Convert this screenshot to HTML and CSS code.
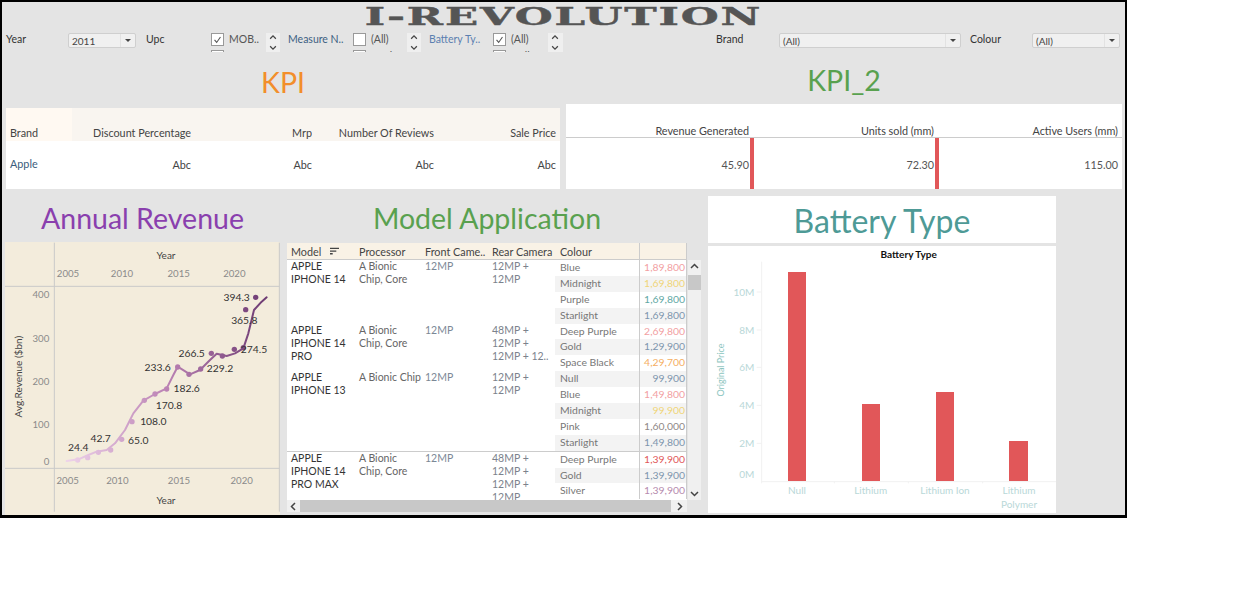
FILE: index.html
```html
<!DOCTYPE html>
<html lang="en">
<head>
<meta charset="utf-8">
<title>I-Revolution</title>
<link rel="stylesheet" href="styles.css">
</head>
<body>
<main class="dash">
  <header class="brandbar"><h1 class="logo">I-REVOLUTION</h1></header>

  <section class="filters">
    <div class="flabel">Year</div>
    <div class="select"><span class="sval">2011</span><span class="sbtn"><i class="tri"></i></span></div>
    <div class="flabel pl10">Upc</div>
    <div class="flist">
      <div class="fitem"><span class="cb on"><svg viewBox="0 0 13 13"><path d="M3 7l2.500 3L10 3.500"/></svg></span><span>MOB..</span></div>
      <div class="fitem"><span class="cb"></span><span>MOB..</span></div>
    </div>
    <div class="spin"><svg viewBox="0 0 14 20"><path d="M4 6l3-3 3 3M4 14l3 3 3-3"/></svg></div>
    <div class="flabel pl8 blue">Measure N..</div>
    <div class="flist">
      <div class="fitem"><span class="cb"></span><span>(All)</span></div>
      <div class="fitem"><span class="cb on"></span><span>Apple</span></div>
    </div>
    <div class="spin"><svg viewBox="0 0 14 20"><path d="M4 6l3-3 3 3M4 14l3 3 3-3"/></svg></div>
    <div class="flabel pl8 blue2">Battery Ty..</div>
    <div class="flist blue2">
      <div class="fitem"><span class="cb on"><svg viewBox="0 0 13 13"><path d="M3 7l2.500 3L10 3.500"/></svg></span><span>(All)</span></div>
      <div class="fitem"><span class="cb"></span><span>Null</span></div>
    </div>
    <div class="spin"><svg viewBox="0 0 14 20"><path d="M4 6l3-3 3 3M4 14l3 3 3-3"/></svg></div>
    <div class="flabel pl153">Brand</div>
    <div class="select"><span class="sval">(All)</span><span class="sbtn"><i class="tri"></i></span></div>
    <div class="flabel pl9">Colour</div>
    <div class="select"><span class="sval">(All)</span><span class="sbtn"><i class="tri"></i></span></div>
  </section>

  <section class="kpis">
    <div class="kpi-left">
      <h2 class="title orange kpi-title-l">KPI</h2>
      <div class="ktable">
        <div class="khead kbrand">Brand</div>
        <div class="khead">Discount Percentage</div>
        <div class="khead">Mrp</div>
        <div class="khead">Number Of Reviews</div>
        <div class="khead">Sale Price</div>
        <div class="khead"></div>
        <div class="kcell kleft">Apple</div>
        <div class="kcell">Abc</div>
        <div class="kcell">Abc</div>
        <div class="kcell">Abc</div>
        <div class="kcell">Abc</div>
        <div class="kcell"></div>
      </div>
    </div>
    <div class="kpi-right">
      <h2 class="title green kpi-title-r">KPI_2</h2>
      <div class="k2table">
        <div class="k2head">Revenue Generated</div>
        <div class="k2head">Units sold (mm)</div>
        <div class="k2head">Active Users (mm)</div>
        <div class="k2cell bar">45.90</div>
        <div class="k2cell bar">72.30</div>
        <div class="k2cell">115.00</div>
      </div>
    </div>
  </section>

  <section class="lower">
    <div class="annual">
      <h2 class="title purple head52">Annual Revenue</h2>
      <div class="annual-panel">
        <svg class="chart" viewBox="15 126 825 819" width="275" height="273">
          <defs>
            <linearGradient id="rev" gradientUnits="userSpaceOnUse" x1="200" y1="0" x2="800" y2="0">
              <stop offset="0" stop-color="#eed3ea"/>
              <stop offset="0.5" stop-color="#bb82b4"/>
              <stop offset="1" stop-color="#6c3a72"/>
            </linearGradient>
          </defs>
          <g class="rule">
            <path d="M163 128V935M15 259H838M15 805H838M838 128V935"/>
          </g>
          <path class="revline" d="M200 783L235 778 265 765 290 755 320 750 345 730 375 690 400 640 430 602 465 582 500 565 520 525 533 500 570 523 600 510 630 480 650 461 680 468 705 460 730 445 745 400 762 330 785 305 800 292"/>
          <g class="revdots">
            <circle cx="233" cy="780" r="8"/><circle cx="263" cy="773" r="8"/><circle cx="295" cy="757" r="8"/><circle cx="332" cy="750" r="8"/><circle cx="365" cy="718" r="8"/><circle cx="396" cy="665" r="8"/><circle cx="433" cy="601" r="8"/><circle cx="465" cy="582" r="8"/><circle cx="500" cy="567" r="8"/><circle cx="533" cy="501" r="8"/><circle cx="567" cy="523" r="8"/><circle cx="602" cy="507" r="8"/><circle cx="634" cy="460" r="8"/><circle cx="667" cy="468" r="8"/><circle cx="703" cy="448" r="8"/><circle cx="730" cy="443" r="8"/><circle cx="737" cy="329" r="8"/><circle cx="767" cy="292" r="8"/>
          </g>
          <g class="ctext tick">
            <text x="204" y="232">2005</text><text x="366" y="232">2010</text><text x="536" y="232">2015</text><text x="703" y="232">2020</text>
            <text x="203" y="852">2005</text><text x="352" y="852">2010</text><text x="537" y="852">2015</text><text x="725" y="852">2020</text>
          </g>
          <g class="ctext tick endt">
            <text x="148" y="295">400</text><text x="148" y="427">300</text><text x="148" y="555">200</text><text x="148" y="685">100</text><text x="148" y="796">0</text>
          </g>
          <g class="ctext axis">
            <text x="498" y="176">Year</text><text x="498" y="911">Year</text>
            <text transform="translate(65 530) rotate(-90)">Avg.Revenue ($bn)</text>
          </g>
          <g class="ctext dlabel">
            <text x="235" y="752">24.4</text><text x="302" y="726">42.7</text><text x="415" y="731">65.0</text><text x="460" y="675">108.0</text><text x="507" y="627">170.8</text><text x="560" y="577">182.6</text><text x="473" y="513">233.6</text><text x="575" y="470">266.5</text><text x="660" y="517">229.2</text><text x="762" y="458">274.5</text><text x="733" y="373">365.8</text><text x="710" y="303">394.3</text>
          </g>
        </svg>
      </div>
    </div>

    <div class="model">
      <h2 class="title green head53">Model Application</h2>
      <div class="mwrap">
        <div class="mtable">
          <div class="mhead">
            <div class="mh first">Model<svg class="sort" viewBox="0 0 10 9"><path d="M0 1h10M0 4h7M0 7h3"/></svg></div>
            <div class="mh">Processor</div>
            <div class="mh">Front Came..</div>
            <div class="mh">Rear Camera</div>
            <div class="mh mcolour">Colour</div>
            <div class="mh mprice"></div>
          </div>
          <div class="mbody">
            <div class="mgroup">
              <div class="mname">APPLE<br>IPHONE 14</div>
              <div class="mproc">A Bionic<br>Chip, Core</div>
              <div class="mfront">12MP</div>
              <div class="mrear">12MP +<br>12MP</div>
              <div class="colours">
                <div class="crow"><span class="cname">Blue</span><span class="cprice red-l">1,89,800</span></div>
                <div class="crow"><span class="cname">Midnight</span><span class="cprice yellow">1,69,800</span></div>
                <div class="crow"><span class="cname">Purple</span><span class="cprice teal">1,69,800</span></div>
                <div class="crow"><span class="cname">Starlight</span><span class="cprice slate">1,69,800</span></div>
              </div>
            </div>
            <div class="mgroup">
              <div class="mname">APPLE<br>IPHONE 14<br>PRO</div>
              <div class="mproc">A Bionic<br>Chip, Core</div>
              <div class="mfront">12MP</div>
              <div class="mrear">48MP +<br>12MP +<br>12MP + 12..</div>
              <div class="colours">
                <div class="crow"><span class="cname">Deep Purple</span><span class="cprice red-l">2,69,800</span></div>
                <div class="crow"><span class="cname">Gold</span><span class="cprice slate">1,29,900</span></div>
                <div class="crow"><span class="cname">Space Black</span><span class="cprice amber">4,29,700</span></div>
              </div>
            </div>
            <div class="mgroup">
              <div class="mname">APPLE<br>IPHONE 13</div>
              <div class="mproc">A Bionic Chip</div>
              <div class="mfront">12MP</div>
              <div class="mrear">12MP +<br>12MP</div>
              <div class="colours flip">
                <div class="crow"><span class="cname">Null</span><span class="cprice slate">99,900</span></div>
                <div class="crow"><span class="cname">Blue</span><span class="cprice red-l">1,49,800</span></div>
                <div class="crow"><span class="cname">Midnight</span><span class="cprice yellow">99,900</span></div>
                <div class="crow"><span class="cname">Pink</span><span class="cprice grey">1,60,000</span></div>
                <div class="crow"><span class="cname">Starlight</span><span class="cprice slate">1,49,800</span></div>
              </div>
            </div>
            <div class="mgroup divided">
              <div class="mname">APPLE<br>IPHONE 14<br>PRO MAX</div>
              <div class="mproc">A Bionic<br>Chip, Core</div>
              <div class="mfront">12MP</div>
              <div class="mrear">48MP +<br>12MP +<br>12MP +<br>12MP</div>
              <div class="colours">
                <div class="crow"><span class="cname">Deep Purple</span><span class="cprice red">1,39,900</span></div>
                <div class="crow"><span class="cname">Gold</span><span class="cprice slate">1,39,900</span></div>
                <div class="crow"><span class="cname">Silver</span><span class="cprice mauve">1,39,900</span></div>
              </div>
            </div>
          </div>
        </div>
        <div class="vscroll">
          <svg class="arrow" viewBox="0 0 13 13"><path d="M3 8l3.500-3.500L10 8"/></svg>
          <div class="vthumb"></div>
          <svg class="arrow arrow-end" viewBox="0 0 13 13"><path d="M3 5l3.500 3.500L10 5"/></svg>
        </div>
        <div class="hscroll">
          <svg class="arrow" viewBox="0 0 13 13"><path d="M8 3L4.500 6.500 8 10"/></svg>
          <div class="hthumb"></div>
          <svg class="arrow arrow-wide" viewBox="0 0 16 13"><path d="M7 3l3.500 3.500L7 10"/></svg>
        </div>
      </div>
    </div>

    <div class="battery">
      <div class="bat-title"><h2 class="title teal-t">Battery Type</h2></div>
      <div class="bat-chart">
        <svg class="chart" viewBox="24 168 1044 801" width="348" height="267">
          <path class="brule" d="M185 215V880M185 875H1068M403 875v5M625 875v5M848 875v5M170 306h15M170 420h15M170 532h15M170 646h15M170 760h15"/>
          <g class="bars">
            <rect x="264" y="246" width="54" height="627"/>
            <rect x="486" y="642" width="54" height="231"/>
            <rect x="708" y="606" width="54" height="267"/>
            <rect x="927" y="753" width="57" height="120"/>
          </g>
          <text class="ctext btitle" x="626" y="203">Battery Type</text>
          <g class="ctext btick endt">
            <text x="163" y="317">10M</text><text x="163" y="431">8M</text><text x="163" y="543">6M</text><text x="163" y="657">4M</text><text x="163" y="771">2M</text><text x="163" y="864">0M</text>
          </g>
          <g class="ctext btick">
            <text x="291" y="913">Null</text><text x="512" y="913">Lithium</text><text x="735" y="913">Lithium Ion</text><text x="957" y="913">Lithium</text><text x="957" y="954">Polymer</text>
          </g>
          <text class="ctext baxis" transform="translate(72 540) rotate(-90)">Original Price</text>
        </svg>
      </div>
    </div>
  </section>
</main>
</body>
</html>
```

FILE: styles.css
```css
* { box-sizing: border-box; }
html, body { margin: 0; padding: 0; background: #fff; }
body { font-family: "Lato", "Liberation Sans", sans-serif; font-size: 10px; color: #333; }

.dash {
  width: 1127px;
  height: 518px;
  background: #e4e4e4;
  border: solid #000;
  border-width: 2px 2px 3px 2px;
  overflow: hidden;
}

.brandbar { height: 24px; display: flex; justify-content: center; }
.logo {
  margin: 5px 0 0;
  font: 700 24px/20px "DejaVu Serif", "Liberation Serif", serif;
  color: #555;
  letter-spacing: 1px;
  -webkit-text-stroke: 0.4px #555;
  transform: scaleX(1.815);
  white-space: nowrap;
}

.filters {
  margin: 7px 0 5px;
  height: 19px;
  padding-left: 4px;
  display: grid;
  grid-template-columns: 62px 68px 75px 55px 14px 73px 54px 14px 72px 55px 15px 216px 182px 71px 88px;
}
.flabel { font-size: 10.5px; line-height: 12px; color: #333; white-space: nowrap; }
.pl8 { padding-left: 8px; }
.pl9 { padding-left: 9px; }
.pl10 { padding-left: 10px; }
.pl153 { padding-left: 153px; }
.blue { color: #3d5f82; }
.blue2 { color: #5b7fb0; }

.select {
  height: 15px;
  display: flex;
  background: #f0f0f0;
  border: 1px solid #cfcfcf;
  border-radius: 2px;
}
.sval { flex: 1; font-size: 10px; line-height: 14px; padding-left: 3px; color: #444; }
.sbtn { width: 15px; border-left: 1px solid #e2e2e2; display: flex; align-items: center; justify-content: center; }
.tri { width: 0; height: 0; border: 3px solid transparent; border-top-color: #444; border-bottom: 0; }

.flist { height: 19px; overflow: hidden; font-size: 10.5px; color: #555; }
.fitem { height: 17px; display: flex; gap: 5px; align-items: flex-start; line-height: 13px; }
.cb { width: 13px; height: 13px; background: #fff; border: 1px solid #999; display: block; flex: none; }
.cb svg { display: block; width: 11px; height: 11px; }
.cb path { fill: none; stroke: #555; stroke-width: 1.300; }

.spin { height: 19px; background: #efefef; }
.spin svg { display: block; width: 14px; height: 19px; }
.spin path { fill: none; stroke: #444; stroke-width: 1.300; }

.kpis { display: grid; grid-template-columns: 554px 556px; column-gap: 6px; padding-left: 4px; }
.title { margin: 0; font-weight: 400; font-size: 28.500px; text-align: center; white-space: nowrap; }
.orange { color: #f28e2b; }
.green { color: #59a14f; }
.purple { color: #8a3fae; }
.teal-t { color: #4e9a96; font-size: 32px; }
.kpi-title-l { height: 51px; line-height: 50px; }
.kpi-title-r { height: 47px; line-height: 47px; }

.ktable {
  height: 81px;
  background: #fff;
  display: grid;
  grid-template-columns: 66px 119px 121px 122px 122px 4px;
  grid-template-rows: 33px 48px;
  font-size: 10.800px;
}
.khead { background: #f9f5f0; text-align: right; padding-top: 19px; line-height: 12px; white-space: nowrap; color: #444; }
.kbrand { background: #fff9f2; text-align: left; padding-left: 4px; }
.kcell { text-align: right; line-height: 12px; padding-top: 18px; color: #444; }
.kleft { text-align: left; padding-left: 4px; color: #3b5d7c; padding-top: 17px; }

.k2table {
  height: 85px;
  background: #fff;
  display: grid;
  grid-template-columns: 188px 185px 183px;
  grid-template-rows: 34px 51px;
  font-size: 10.800px;
}
.k2head { border-bottom: 1px solid #ccc; text-align: right; padding: 21px 5px 0 0; line-height: 12px; white-space: nowrap; color: #444; }
.k2head:nth-child(3) { padding-right: 4px; }
.k2cell { text-align: right; padding: 21px 5px 0 0; line-height: 12px; color: #555; }
.k2cell:last-child { padding-right: 4px; }
.bar { border-right: 4px solid #e15759; padding-right: 1px; }

.lower { margin-top: 1px; display: flex; align-items: flex-start; padding-left: 3px; }
.annual { width: 275px; }
.head52 { height: 52px; line-height: 56px; }
.head53 { height: 53px; line-height: 56px; padding-right: 14px; }
.annual-panel { height: 273px; background: #f3ecdc; }
.chart { display: block; }
.rule path { fill: none; stroke: #c9c9c9; stroke-width: 3; }
.revline { fill: none; stroke: url(#rev); stroke-width: 6; stroke-linejoin: round; stroke-linecap: round; }
.revdots circle { fill: url(#rev); }
.ctext { text-anchor: middle; font-family: "Lato", "Liberation Sans", sans-serif; }
.endt { text-anchor: end; }
.tick { font-size: 29px; fill: #8a8a8a; }
.axis { font-size: 30px; fill: #444; }
.dlabel { font-size: 31px; fill: #333; }

.model { width: 414px; margin-left: 7px; }
.mwrap { display: grid; grid-template-columns: 400px 14px; grid-template-rows: 257px 12px; }
.mtable { overflow: hidden; }
.mhead, .mgroup { display: grid; grid-template-columns: 72px 66px 67px 63px 132px; }
.mhead { grid-template-columns: 72px 66px 67px 63px 84px 48px; height: 17px; background: #f9f2e6; border-bottom: 1px solid #ccc; }
.mh { font-size: 10.800px; line-height: 17px; white-space: nowrap; color: #444; }
.first { padding-left: 4px; display: flex; align-items: center; gap: 9px; }
.sort { width: 9px; height: 9px; flex: none; }
.sort path { fill: none; stroke: #444; stroke-width: 1.400; }
.mcolour { padding-left: 5px; }
.mprice { border-left: 1px solid #ccc; border-right: 1px solid #ccc; }
.mbody { height: 240px; overflow: hidden; background: #fff; }
.mgroup { font-size: 10.500px; line-height: 13px; }
.divided { border-top: 1px solid #ccc; }
.mname { padding-left: 4px; color: #333; }
.mproc { color: #666; white-space: nowrap; }
.mfront { color: #7b8896; }
.mrear { color: #7b828c; white-space: nowrap; }
.crow { height: 15.900px; display: grid; grid-template-columns: 84px 48px; line-height: 15px; font-size: 10.400px; }
.crow:nth-child(even) { background: #f3f3f3; }
.flip .crow:nth-child(even) { background: #fff; }
.flip .crow:nth-child(odd) { background: #f3f3f3; }
.cname { padding-left: 5px; color: #777; white-space: nowrap; }
.cprice { text-align: right; padding-right: 1px; border-left: 1px solid #ccc; border-right: 1px solid #ccc; }
.red-l { color: #f2a0a2; }
.red { color: #e15759; }
.yellow { color: #f0d578; }
.teal { color: #5fa8a4; }
.slate { color: #7d95ad; }
.grey { color: #8f8886; }
.mauve { color: #b68bae; }
.amber { color: #f5ae62; }

.vscroll { height: 240px; margin: 17px 0 0 1px; background: #f0f0f0; display: flex; flex-direction: column; }
.vthumb { height: 15px; background: #c8c8c8; margin-top: 2px; }
.arrow { display: block; width: 13px; height: 13px; flex: none; }
.arrow-wide { width: 16px; }
.arrow path { fill: none; stroke: #444; stroke-width: 1.500; }
.arrow-end { margin-top: auto; }
.hscroll { background: #f0f0f0; display: flex; }
.hthumb { flex: 1; background: #c8c8c8; }

.battery { width: 348px; margin-left: 7px; padding-top: 6px; }
.bat-title { height: 47px; background: #fff; margin-bottom: 3px; }
.bat-title .title { line-height: 49px; }
.bat-chart { height: 267px; background: #fff; }
.brule { fill: none; stroke: #f1f1f1; stroke-width: 3; }
.bars rect { fill: #e15759; }
.btitle { font-size: 30px; fill: #111; font-weight: 700; }
.btick { font-size: 30px; fill: #b9d8d8; }
.baxis { font-size: 27px; fill: #8cc5c0; }
```
